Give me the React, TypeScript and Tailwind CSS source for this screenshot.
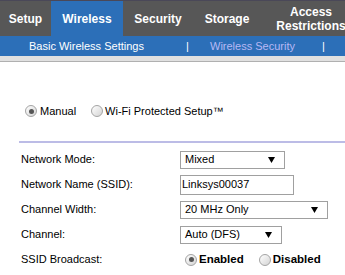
import React from 'react';

const font = { fontFamily: '"Liberation Sans", Arial, sans-serif' };

function Radio({ checked }: { checked?: boolean }) {
  return (
    <span className="w-[12px] h-[12px] rounded-full border border-[#a4a4a4] bg-gradient-to-br from-[#ffffff] to-[#d4d4d4] flex items-center justify-center shrink-0">
      {checked && <span className="w-[5px] h-[5px] rounded-full bg-[#555555]" />}
    </span>
  );
}

function Arrow() {
  return (
    <svg width="7" height="6" viewBox="0 0 7 6" className="shrink-0">
      <polygon points="0,0 7,0 3.5,6" fill="#000" />
    </svg>
  );
}

function Select({ value, width }: { value: string; width: string }) {
  return (
    <div className={`${width} h-[18px] border border-[#a0a0a0] bg-white flex items-center justify-between pl-[4px] pr-[9px] text-[11px] text-black`}>
      <span>{value}</span>
      <Arrow />
    </div>
  );
}

const tabs = [
  { label: 'Setup', w: 'w-[51px]' },
  { label: 'Wireless', w: 'w-[72px]', active: true },
  { label: 'Security', w: 'w-[70px]' },
  { label: 'Storage', w: 'w-[68px]' },
];

export default function App() {
  return (
    <div className="w-[345px] h-[275px] overflow-hidden bg-white" style={font}>
      {/* Top tabs */}
      <div className="h-px bg-[#4a4858]" />
      <div className="flex h-[35px] bg-[#575757] text-white font-bold text-[12px] leading-[14px]">
        {tabs.map(t => (
          <div
            key={t.label}
            className={`${t.w} shrink-0 flex items-center justify-center ${t.active ? 'bg-[#2c6fb8]' : ''}`}
          >
            {t.label}
          </div>
        ))}
        <div className="w-[100px] shrink-0 flex flex-col items-center justify-center">
          <span>Access</span>
          <span>Restrictions</span>
        </div>
      </div>

      {/* Sub nav */}
      <div className="h-[20px] bg-[#2c6fb8] flex items-center text-[11px] text-white">
        <span className="w-[186px] pl-[29px] shrink-0">Basic Wireless Settings</span>
        <span className="w-[24px] shrink-0">|</span>
        <span className="w-[112px] shrink-0 text-[#b8b8f4]">Wireless Security</span>
        <span>|</span>
      </div>
      <div className="h-[6px] bg-[#e0e0e0] border-b border-[#b0b0b0]" />

      {/* Mode */}
      <div className="pt-[42px] pl-[25px] flex items-center h-[56px] text-[11px] text-black">
        <Radio checked />
        <span className="ml-[3px]">Manual</span>
        <span className="ml-[15px]"><Radio /></span>
        <span className="ml-[2px]">Wi-Fi Protected Setup™</span>
      </div>
      <div className="ml-[19px] mt-[23px] h-[2px] bg-[#bcbce6]" />

      {/* Form */}
      <div className="mt-[4px] text-[11px] text-black">
        <div className="h-[25px] flex items-center">
          <span className="w-[180px] pl-[21px] shrink-0">Network Mode:</span>
          <Select value="Mixed" width="w-[105px]" />
        </div>
        <div className="h-[25px] flex items-center">
          <span className="w-[180px] pl-[21px] shrink-0">Network Name (SSID):</span>
          <div className="w-[114px] h-[20px] border border-[#a0a0a0] flex items-center pl-[1px]">Linksys00037</div>
        </div>
        <div className="h-[25px] flex items-center">
          <span className="w-[180px] pl-[21px] shrink-0">Channel Width:</span>
          <Select value="20 MHz Only" width="w-[148px]" />
        </div>
        <div className="h-[25px] flex items-center">
          <span className="w-[180px] pl-[21px] shrink-0">Channel:</span>
          <Select value="Auto (DFS)" width="w-[102px]" />
        </div>
        <div className="h-[25px] flex items-center">
          <span className="w-[185px] pl-[21px] shrink-0">SSID Broadcast:</span>
          <Radio checked />
          <span className="ml-[2px] font-bold text-[11.5px]">Enabled</span>
          <span className="ml-[15px]"><Radio /></span>
          <span className="ml-[2px] font-bold text-[11.5px]">Disabled</span>
        </div>
      </div>
    </div>
  );
}
